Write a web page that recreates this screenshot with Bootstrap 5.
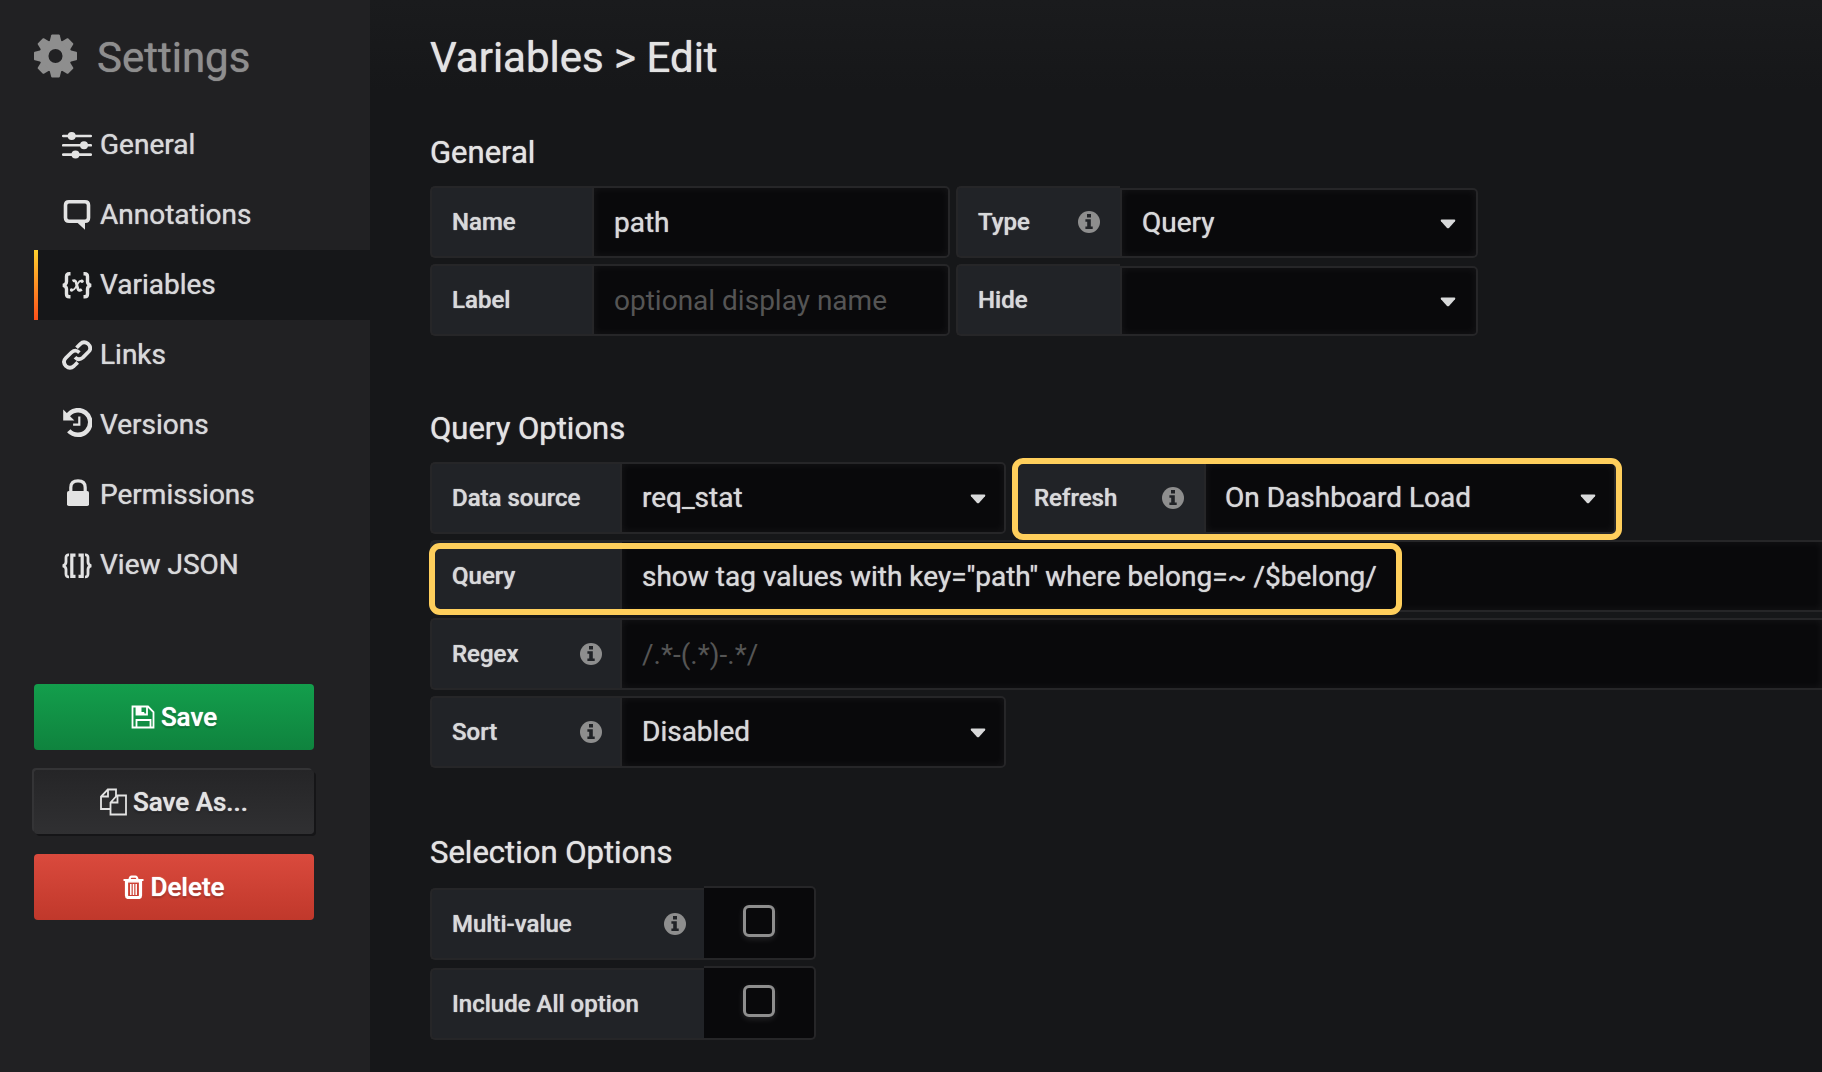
<!DOCTYPE html>
<html lang="en">
<head>
<meta charset="utf-8">
<meta name="viewport" content="width=device-width, initial-scale=1">
<title>Settings - Variables</title>
<link href="https://cdn.jsdelivr.net/npm/bootstrap@5.3.0/dist/css/bootstrap.min.css" rel="stylesheet">
<style>
  body { font-family: Roboto, "Liberation Sans", sans-serif; font-size: 28px; color: #d8d9da; background: #161719; overflow-x: hidden; text-shadow: 0 0 1px currentColor; }
  .settings-aside { width: 370px; flex: none; background: #212123; padding: 33px 0 32px 34px; }
  .page-title { font-size: 42px; font-weight: 400; line-height: 50px; margin: 0; color: #e3e3e3; }
  .settings-aside .page-title { color: #8e8e8e; gap: 20px; margin-bottom: 27px; }
  .aside-link { height: 70px; padding: 0 0 0 28px; gap: 8px; color: #d8d9da; text-decoration: none; line-height: 36px; }
  .aside-link:hover { color: #fff; }
  .aside-link svg { width: 30px; height: 30px; flex: none; color: #e3e3e3; }
  .aside-link.active { background: linear-gradient(#ffd02e, #ff4f1a) left / 4px 100% no-repeat #161719; }
  .aside-actions { width: 280px; margin-top: 84px; gap: 20px; }
  .action-btn { height: 66px; border: 0; border-radius: 4px; font-size: 26px; font-weight: 500; color: #fff; text-shadow: 0 0 1px currentColor, 0 2px 2px rgba(0,0,0,.25); padding: 0; display: flex; align-items: center; justify-content: center; gap: 6px; }
  .action-btn:hover { color: #fff; }
  .save-btn { background: linear-gradient(#139e4c, #0f833e); }
  .saveas-btn, .saveas-btn:hover { background: linear-gradient(#252527, #303032); color: #e3e3e3; height: 64px; box-shadow: -2px -2px 0 #343436, 2px 2px 0 #151517; }
  .delete-btn { background: linear-gradient(#da4a3d, #c0382b); }
  .settings-main { padding: 33px 0 32px 60px; min-width: 0; background: linear-gradient(#1a1b1d, #161719 90px); }
  .settings-main .page-title { margin-bottom: 52px; }
  .section-title { font-size: 31px; font-weight: 400; line-height: 36px; margin: 0 0 15px; color: #e3e3e3; }
  .form-section { margin-bottom: 75px; }
  .query-section { margin-bottom: 67px; }
  .form-lines, .form-line { gap: 6px; }
  .field { position: relative; display: flex; align-items: flex-end; }
  .field-label { flex: none; height: 72px; display: flex; align-items: center; justify-content: space-between; padding: 0 18px 0 20px; background: #212327; border: 2px solid #262628; border-right: 0; border-radius: 5px 0 0 5px; font-size: 24px; font-weight: 500; }
  .field-label svg { width: 22px; height: 22px; color: #8e8e8e; }
  .label-s { width: 162px; }
  .label-m { width: 190px; }
  .label-l { width: 274px; }
  .short .field-label { width: 164px; padding-right: 20px; }
  .refresh .field-label { width: 192px; padding-right: 20px; }
  .field-input { height: 72px; width: 358px; padding: 0 20px; font-size: 28px; color: #d8d9da; text-shadow: inherit; background: #09090b; border: 2px solid #262628; border-radius: 0 5px 5px 0; box-shadow: inset 0 0 8px rgba(255,255,255,.06); appearance: none; outline: 0; }
  .field-input::placeholder { color: #555; opacity: 1; text-shadow: none; }
  .wide .field-input { width: 100%; flex: 1; border-right: 0; border-radius: 0; }
  .select-box { position: relative; display: flex; }
  .select-box svg { position: absolute; right: 20px; top: 50%; width: 16px; height: 10px; margin-top: -4px; pointer-events: none; color: #d8d9da; }
  .short .select-box svg { right: 22px; }
  .short .field-input { height: 70px; }
  .source .field-input { width: 386px; }
  .refresh .field-input { width: 412px; padding-left: 19px; }
  .marker { position: absolute; border: 6px solid #ffcf5c; border-radius: 11px; pointer-events: none; z-index: 2; }
  .refresh .marker { inset: -4px -6px -6px 0; }
  .query .marker { inset: 3px auto -3px -1px; width: 973px; }
  .switch-box { width: 112px; height: 74px; background: #09090b; border: 2px solid #262628; border-left: 0; border-radius: 0 5px 5px 0; display: flex; align-items: center; justify-content: center; padding-bottom: 5px; }
  .switch-box input { appearance: none; width: 32px; height: 32px; margin: 0; border: 3px solid #8e8e8e; border-radius: 6px; box-shadow: 0 2px 6px rgba(255,255,255,.12); }
  .switch-box input:checked { background: #8e8e8e; }
</style>
<script src="https://cdn.jsdelivr.net/npm/bootstrap@5.3.0/dist/js/bootstrap.bundle.min.js"></script>
</head>
<body>
<svg class="d-none">
  <symbol id="info" viewBox="0 0 22 22"><circle cx="11" cy="11" r="11" fill="currentColor"/><path d="M9 3h4v3.4H9zM7.4 8.2h5.4v7.2h1.9V18H7.4v-2.6h1.8v-4.7H7.4z" fill="#212327"/></symbol>
  <symbol id="caret" viewBox="0 0 16 10"><path d="M1.500 .5h13q1.500 .4.5 1.700L9 8.900q-1 .9-2 0L1 2.200Q0 .9 1.500.5z" fill="currentColor"/></symbol>
</svg>
<div class="d-flex min-vh-100">
  <aside class="settings-aside">
    <h2 class="page-title d-flex align-items-center">
      <svg class="mb-1" width="43" height="44" viewBox="-22 -22 44 44" fill="currentColor" aria-hidden="true">
        <path fill-rule="evenodd" d="M0-16.500A16.500 16.500 0 1 1 0 16.500A16.500 16.500 0 1 1 0-16.500zM0-7.200A7.200 7.200 0 1 0 0 7.200A7.200 7.200 0 1 0 0-7.200z"/>
        <g id="teeth"><path id="tooth" d="M-6.200-14L-4.400-21.200Q-4.200-22-3.400-22H3.400Q4.200-22 4.400-21.200L6.200-14z"/><use href="#tooth" transform="rotate(90)"/><use href="#tooth" transform="rotate(180)"/><use href="#tooth" transform="rotate(270)"/></g>
        <use href="#teeth" transform="rotate(45)"/>
      </svg>
      <span>Settings</span>
    </h2>
    <nav class="d-flex flex-column">
      <a class="aside-link d-flex align-items-center" href="#">
        <svg viewBox="0 0 30 30" aria-hidden="true"><path d="M1.200 6h27.600M1.200 15.300h27.600M1.200 24.600h27.600" stroke="currentColor" stroke-width="2.600" stroke-linecap="round"/><g fill="currentColor"><circle cx="9.700" cy="6" r="4"/><circle cx="22" cy="15.300" r="4"/><circle cx="13.500" cy="24.600" r="4"/></g></svg>
        General</a>
      <a class="aside-link d-flex align-items-center" href="#">
        <svg viewBox="0 0 30 30" aria-hidden="true"><path d="M7 1.800h16q3.500 0 3.500 3.500v12.500q0 3.500-3.500 3.500H7q-3.500 0-3.500-3.500V5.300Q3.500 1.800 7 1.800z" fill="none" stroke="currentColor" stroke-width="3.600"/><path d="M13.500 21l9.500 8.800V21z" fill="currentColor"/></svg>
        Annotations</a>
      <a class="aside-link active d-flex align-items-center" href="#" aria-current="page">
        <svg viewBox="0 0 30 30" fill="none" stroke="currentColor" aria-hidden="true"><path d="M8.500 3.700H7.300Q4.500 3.700 4.500 6.500v5.300Q4.500 14.500 1 15.300 4.500 16 4.500 19v5Q4.500 26.800 7.300 26.800H8.500M21.500 3.700h1.200q2.800 0 2.800 2.800v5.300q0 2.700 3.500 3.500-3.500.7-3.500 3.700v5q0 2.800-2.800 2.800H21.500" stroke-width="3.400"/><path d="M10.500 11q2.800-1.400 3.600 1.500l1.700 6q.9 3.200 4 .8" stroke-width="2.800"/><path d="M20.500 11q-2.800-1-4.700 2.600l-2.300 4q-2 3.400-4.500 2.400" stroke-width="1.800"/><g fill="currentColor" stroke="none"><circle cx="20" cy="11.200" r="1.700"/><circle cx="9.500" cy="20" r="1.700"/></g></svg>
        Variables</a>
      <a class="aside-link d-flex align-items-center" href="#">
        <svg viewBox="0 0 30 30" fill="none" stroke="currentColor" stroke-width="3.700" aria-hidden="true"><path d="M14.500 7.800l3.700-3.700q3.600-3.600 7.800-.3q4.200 4.200.6 8l-5.800 5.800q-4.200 3.400-7.800-.4"/><path d="M15.700 22.400L12 26q-4 3.500-8 .1q-4-4.200-.2-8.100l5.800-5.700q4-3.400 7.800.3"/></svg>
        Links</a>
      <a class="aside-link d-flex align-items-center" href="#">
        <svg class="mb-1" viewBox="0 0 30 30" fill="none" stroke="currentColor" aria-hidden="true"><path d="M5.500 8A12.300 12.300 0 1 1 6.800 22.700" stroke-width="4.600"/><path d="M17.300 8.600v8h-6.200" stroke-width="2.200"/><path d="M1.200 1.600v10.800H12.400z" fill="currentColor" stroke="none"/></svg>
        Versions</a>
      <a class="aside-link d-flex align-items-center" href="#">
        <svg class="mb-1" viewBox="0 0 30 30" aria-hidden="true"><path d="M8.800 14V9.500q0-6.700 7.200-6.700t7.200 6.700V14" fill="none" stroke="currentColor" stroke-width="3.200"/><rect x="5" y="13" width="22" height="15" rx="1.800" fill="currentColor"/></svg>
        Permissions</a>
      <a class="aside-link d-flex align-items-center" href="#">
        <svg viewBox="0 0 30 30" fill="none" stroke="currentColor" stroke-width="2.800" aria-hidden="true"><path d="M7 4.900Q4 4.600 4 7.600v4.500Q4 15.100.8 15.900 4 16.600 4 19.600v4.500q0 3 3 2.800M23 4.900q3-.3 3 2.700v4.500q0 3 3.200 3.800-3.200.7-3.200 3.700v4.500q0 3-3 2.800"/><path d="M13.500 5.200H9.800v21.200h3.700M16.500 5.200h3.700v21.200h-3.700" stroke-width="3.200"/></svg>
        View JSON</a>
    </nav>
    <div class="aside-actions d-flex flex-column">
      <button type="button" class="btn action-btn save-btn">
        <svg width="24" height="24" viewBox="0 0 24 24" fill="none" stroke="currentColor" stroke-width="1.800" aria-hidden="true"><path d="M1.500 1.500H17l5.500 5.500v15.500h-21z"/><path d="M5.500 22.500V15h14v7.500M5.500 1.500v8h10.500v-8"/><path d="M5.500 2h4.500v7H5.500zM10 7.500h3V9h-3z" fill="currentColor" stroke-width="1"/></svg>
        Save</button>
      <button type="button" class="btn action-btn saveas-btn">
        <svg width="27" height="28" viewBox="0 0 27 28" fill="none" stroke="currentColor" stroke-width="1.800" aria-hidden="true"><path d="M10 21H1V8.500L7.800 1.500H16v6.500M8 1.500v7H1"/><path d="M10.500 14.500L17 7.500h9v19H10.500zM17.500 7.500v7h-7"/></svg>
        Save As...</button>
      <button type="button" class="btn action-btn delete-btn">
        <svg width="21" height="24" viewBox="0 0 21 24" fill="none" stroke="currentColor" aria-hidden="true"><path d="M.5 5h20M6.500 4.500Q7 1.600 8.500 1.600h4Q14 1.600 14.500 4.500" stroke-width="2.200"/><path d="M3.500 5.500V20.500q0 2 2 2h10q2 0 2-2V5.500" stroke-width="3.200"/><path d="M4 6.800h13" stroke-width="1.500"/><path d="M7.800 9v11M10.500 9v11M13.200 9v11" stroke-width="1.500"/></svg>
        Delete</button>
    </div>
  </aside>

  <main class="settings-main flex-grow-1">
    <h1 class="page-title">Variables &gt; Edit</h1>
    <form>
      <section class="form-section">
        <h2 class="section-title">General</h2>
        <div class="form-lines d-flex flex-column">
          <div class="form-line d-flex">
            <div class="field"><label class="field-label label-s" for="name">Name</label><input class="field-input" id="name" type="text" value="path"></div>
            <div class="field short"><label class="field-label label-s" for="type">Type <svg aria-hidden="true"><use href="#info"/></svg></label><div class="select-box"><select class="field-input" id="type"><option>Query</option></select><svg aria-hidden="true"><use href="#caret"/></svg></div></div>
          </div>
          <div class="form-line d-flex">
            <div class="field"><label class="field-label label-s" for="label">Label</label><input class="field-input" id="label" type="text" placeholder="optional display name"></div>
            <div class="field short"><label class="field-label label-s" for="hide">Hide</label><div class="select-box"><select class="field-input" id="hide"><option></option></select><svg aria-hidden="true"><use href="#caret"/></svg></div></div>
          </div>
        </div>
      </section>

      <section class="query-section">
        <h2 class="section-title">Query Options</h2>
        <div class="form-lines d-flex flex-column">
          <div class="form-line d-flex">
            <div class="field source"><label class="field-label label-m" for="source">Data source</label><div class="select-box"><select class="field-input" id="source"><option>req_stat</option></select><svg aria-hidden="true"><use href="#caret"/></svg></div></div>
            <div class="field refresh"><label class="field-label label-m" for="refresh">Refresh <svg aria-hidden="true"><use href="#info"/></svg></label><div class="select-box"><select class="field-input" id="refresh"><option>On Dashboard Load</option></select><svg aria-hidden="true"><use href="#caret"/></svg></div><span class="marker"></span></div>
          </div>
          <div class="field wide query"><label class="field-label label-m" for="query">Query</label><input class="field-input" id="query" type="text" value="show tag values with key=&quot;path&quot; where belong=~ /$belong/"><span class="marker"></span></div>
          <div class="field wide"><label class="field-label label-m" for="regex">Regex <svg aria-hidden="true"><use href="#info"/></svg></label><input class="field-input" id="regex" type="text" placeholder="/.*-(.*)-.*/"></div>
          <div class="field source"><label class="field-label label-m" for="sort">Sort <svg aria-hidden="true"><use href="#info"/></svg></label><div class="select-box"><select class="field-input" id="sort"><option>Disabled</option></select><svg aria-hidden="true"><use href="#caret"/></svg></div></div>
        </div>
      </section>

      <section>
        <h2 class="section-title">Selection Options</h2>
        <div class="form-lines d-flex flex-column">
          <div class="field"><label class="field-label label-l" for="multi">Multi-value <svg aria-hidden="true"><use href="#info"/></svg></label><div class="switch-box"><input type="checkbox" id="multi"></div></div>
          <div class="field"><label class="field-label label-l" for="all">Include All option</label><div class="switch-box"><input type="checkbox" id="all"></div></div>
        </div>
      </section>
    </form>
  </main>
</div>
</body>
</html>
